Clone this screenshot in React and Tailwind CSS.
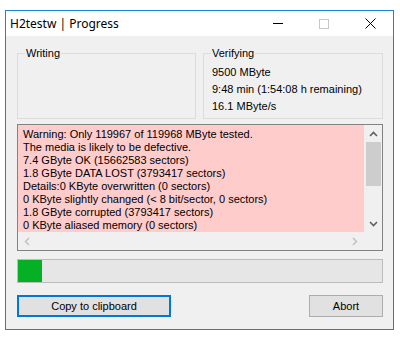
import React from "react";

const font = { fontFamily: '"Liberation Sans", Arial, sans-serif' };

function GroupBox({ label, className = "", children }) {
  return (
    <div className={"relative border border-[#dcdcdc] " + className}>
      <span className="absolute left-[7px] top-[-8px] bg-[#f0f0f0] px-[1px] text-[11px] leading-[14px] text-black">
        {label}
      </span>
      {children}
    </div>
  );
}

const lines = [
  "Warning: Only 119967 of 119968 MByte tested.",
  "The media is likely to be defective.",
  "7.4 GByte OK (15662583 sectors)",
  "1.8 GByte DATA LOST (3793417 sectors)",
  "Details:0 KByte overwritten (0 sectors)",
  "0 KByte slightly changed (< 8 bit/sector, 0 sectors)",
  "1.8 GByte corrupted (3793417 sectors)",
  "0 KByte aliased memory (0 sectors)",
];

export default function App() {
  return (
    <div className="w-[400px] h-[340px] bg-white pt-[10px] pl-[5px]" style={font}>
      <div className="w-[389px] h-[320px] border border-[#1883d7] flex flex-col bg-[#f0f0f0]">
        {/* title bar */}
        <div className="h-[25px] bg-white flex items-center">
          <span
            className="pl-[4px] text-[12px] text-black flex-1"
            style={{ fontFamily: '"Noto Sans", "Open Sans", sans-serif' }}
          >
            H2testw | Progress
          </span>
          <div className="w-[46px] h-full flex items-center justify-center">
            <div className="w-[10px] h-[1px] bg-black" />
          </div>
          <div className="w-[46px] h-full flex items-center justify-center">
            <div className="w-[10px] h-[10px] border border-[#c8c8c8]" />
          </div>
          <div className="w-[46px] h-full flex items-center justify-center">
            <svg width="11" height="11" viewBox="0 0 11 11">
              <path d="M0.5 0.5 L10.5 10.5 M10.5 0.5 L0.5 10.5" stroke="#000" strokeWidth="1" />
            </svg>
          </div>
        </div>

        {/* body */}
        <div className="flex-1 pl-[11px] pt-[17px] flex flex-col">
          <div className="flex gap-[7px]">
            <GroupBox label="Writing" className="w-[179px] h-[66px]" />
            <GroupBox label="Verifying" className="w-[180px] h-[66px]">
              <div className="pt-[10px] pl-[8px] text-[11px] leading-[17px] text-black">
                <div>9500 MByte</div>
                <div>9:48 min (1:54:08 h remaining)</div>
                <div>16.1 MByte/s</div>
              </div>
            </GroupBox>
          </div>

          {/* edit box */}
          <div className="mt-[5px] w-[366px] h-[127px] border border-[#828282] flex flex-col bg-[#f0f0f0]">
            <div className="flex h-[107px]">
              <div className="flex-1 bg-[#ffcccc] overflow-hidden pl-[5px] pt-[3px] text-[11px] leading-[13px] text-black whitespace-nowrap">
                {lines.map((l) => (
                  <div key={l}>{l}</div>
                ))}
              </div>
              <div className="w-[18px] flex flex-col items-center">
                <div className="h-[17px] w-full flex items-center justify-center">
                  <svg width="9" height="6" viewBox="0 0 9 6">
                    <path d="M1 5 L4.5 1.5 L8 5" stroke="#606060" strokeWidth="1.6" fill="none" />
                  </svg>
                </div>
                <div className="w-[15px] h-[44px] bg-[#cdcdcd]" />
                <div className="flex-1" />
                <div className="h-[17px] w-full flex items-center justify-center">
                  <svg width="9" height="6" viewBox="0 0 9 6">
                    <path d="M1 1 L4.5 4.5 L8 1" stroke="#606060" strokeWidth="1.6" fill="none" />
                  </svg>
                </div>
              </div>
            </div>
            <div className="flex h-[18px]">
              <div className="flex-1 flex items-center justify-between px-[6px]">
                <svg width="6" height="9" viewBox="0 0 6 9">
                  <path d="M5 1 L1.5 4.5 L5 8" stroke="#c4c4c4" strokeWidth="1.6" fill="none" />
                </svg>
                <svg width="6" height="9" viewBox="0 0 6 9">
                  <path d="M1 1 L4.5 4.5 L1 8" stroke="#c4c4c4" strokeWidth="1.6" fill="none" />
                </svg>
              </div>
              <div className="w-[18px]" />
            </div>
          </div>

          {/* progress */}
          <div className="mt-[8px] w-[366px] h-[24px] border border-[#bcbcbc] bg-[#e6e6e6] flex">
            <div className="w-[24px] h-full bg-[#06b025]" />
          </div>

          {/* buttons */}
          <div className="mt-[12px] w-[366px] flex justify-between">
            <button className="w-[154px] h-[22px] border-2 border-[#0078d7] bg-[#e1e1e1] text-[11px] text-black leading-none">
              Copy to clipboard
            </button>
            <button className="w-[74px] h-[22px] border border-[#adadad] bg-[#e1e1e1] text-[11px] text-black leading-none">
              Abort
            </button>
          </div>
        </div>
      </div>
    </div>
  );
}
